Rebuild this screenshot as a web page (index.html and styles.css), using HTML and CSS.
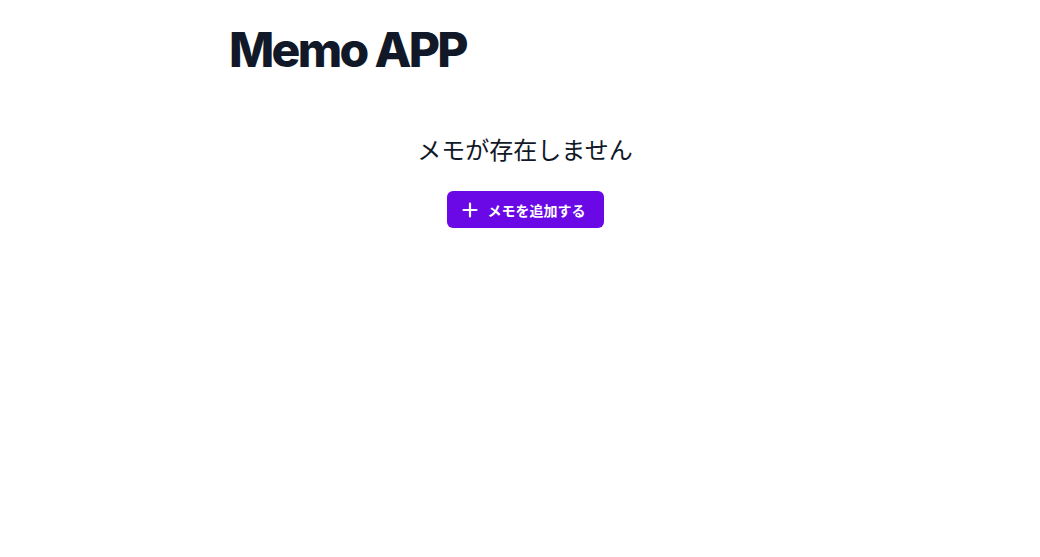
FILE: index.html
```html
<!DOCTYPE html>
<html lang="ja">
<head>
<meta charset="utf-8">
<title>Memo APP</title>
<link rel="stylesheet" href="styles.css">
</head>
<body>
<main class="container">
  <h1 class="title">Memo APP</h1>
  <section class="empty">
    <p class="empty-text">メモが存在しません</p>
    <button class="add-btn" type="button">
      <svg class="plus" viewBox="0 0 16 16" width="16" height="16" aria-hidden="true">
        <path d="M8 1.5v13M1.5 8h13" stroke="currentColor" stroke-width="2.2" fill="none" stroke-linecap="round"/>
      </svg>
      <span>メモを追加する</span>
    </button>
  </section>
</main>
</body>
</html>
```

FILE: styles.css
```css
* { box-sizing: border-box; }
html, body { margin: 0; padding: 0; background: #ffffff; }
body {
  font-family: Inter, "Noto Sans CJK JP", sans-serif;
  color: #111827;
}
.container {
  width: 602px;
  margin: 0 auto;
  padding: 26px 0 0 10px;
}
.title {
  margin: 0;
  font-size: 48px;
  line-height: 1;
  font-weight: 800;
  letter-spacing: -0.056em;
  color: #111827;
}
.empty {
  display: flex;
  flex-direction: column;
  align-items: center;
  margin-top: 61px;
}
.empty-text {
  margin: 0;
  font-size: 24px;
  line-height: 32px;
  color: #111827;
}
.add-btn {
  margin-top: 24px;
  display: flex;
  align-items: center;
  gap: 10px;
  height: 37px;
  padding: 0 18px 0 15px;
  border: none;
  border-radius: 6px;
  background: #6a08e6;
  color: #ffffff;
  font-family: Inter, "Noto Sans CJK JP", sans-serif;
  font-size: 14px;
  font-weight: 600;
  cursor: pointer;
}
.plus { display: block; }
```
